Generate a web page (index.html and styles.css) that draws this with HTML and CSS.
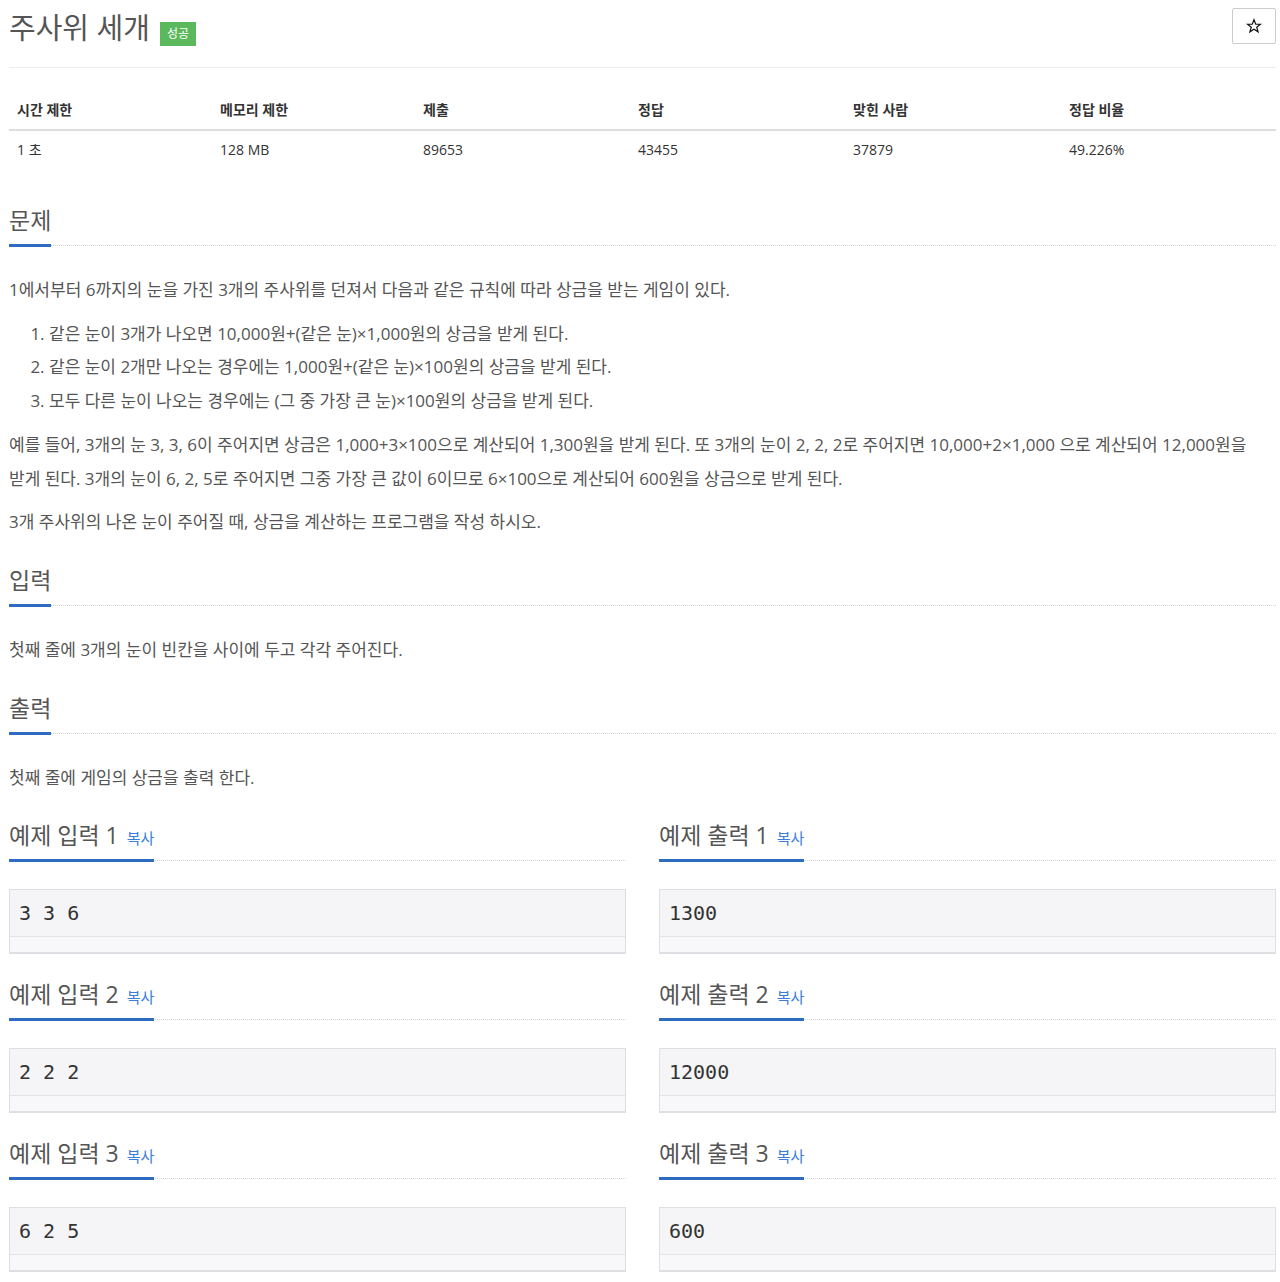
FILE: index.html
```html
<!DOCTYPE html>
<html lang="ko">
<head>
<meta charset="utf-8">
<title>주사위 세개</title>
<link rel="stylesheet" href="styles.css">
</head>
<body>
<div class="page">
  <header class="page-header">
    <div class="title-wrap">
      <h1 class="title">주사위 세개</h1>
      <span class="badge">성공</span>
    </div>
    <button class="star-btn" type="button" aria-label="즐겨찾기">
      <svg class="star-icon" viewBox="0 0 24 24" width="16" height="16" aria-hidden="true">
        <polygon points="12,2.5 14.6,9.2 21.7,9.4 16.1,13.8 18.1,20.8 12,16.7 5.9,20.8 7.9,13.8 2.3,9.4 9.4,9.2" fill="none" stroke="#111" stroke-width="1.8" stroke-linejoin="miter"/>
      </svg>
    </button>
  </header>

  <table class="info">
    <colgroup>
      <col class="c1"><col class="c2"><col class="c3"><col class="c4"><col class="c5"><col class="c6">
    </colgroup>
    <thead>
      <tr><th>시간 제한</th><th>메모리 제한</th><th>제출</th><th>정답</th><th>맞힌 사람</th><th>정답 비율</th></tr>
    </thead>
    <tbody>
      <tr><td>1 초</td><td>128 MB</td><td>89653</td><td>43455</td><td>37879</td><td>49.226%</td></tr>
    </tbody>
  </table>

  <section class="section first">
    <div class="headline"><h2><span class="hl">문제</span></h2></div>
    <div class="body">
      <p>1에서부터 6까지의 눈을 가진 3개의 주사위를 던져서 다음과 같은 규칙에 따라 상금을 받는 게임이 있다.</p>
      <ol>
        <li>같은 눈이 3개가 나오면 10,000원+(같은 눈)×1,000원의 상금을 받게 된다.</li>
        <li>같은 눈이 2개만 나오는 경우에는 1,000원+(같은 눈)×100원의 상금을 받게 된다.</li>
        <li>모두 다른 눈이 나오는 경우에는 (그 중 가장 큰 눈)×100원의 상금을 받게 된다.</li>
      </ol>
      <p>예를 들어, 3개의 눈 3, 3, 6이 주어지면 상금은 1,000+3×100으로 계산되어 1,300원을 받게 된다. 또 3개의 눈이 2, 2, 2로 주어지면 10,000+2×1,000 으로 계산되어 12,000원을 받게 된다. 3개의 눈이 6, 2, 5로 주어지면 그중 가장 큰 값이 6이므로 6×100으로 계산되어 600원을 상금으로 받게 된다.</p>
      <p class="last">3개 주사위의 나온 눈이 주어질 때, 상금을 계산하는 프로그램을 작성 하시오.</p>
    </div>
  </section>

  <section class="section">
    <div class="headline"><h2><span class="hl">입력</span></h2></div>
    <div class="body">
      <p class="last">첫째 줄에 3개의 눈이 빈칸을 사이에 두고 각각 주어진다.</p>
    </div>
  </section>

  <section class="section">
    <div class="headline"><h2><span class="hl">출력</span></h2></div>
    <div class="body">
      <p class="last">첫째 줄에 게임의 상금을 출력 한다.</p>
    </div>
  </section>

  <div class="examples">
    <div class="example">
      <div class="headline"><h2><span class="hl">예제 입력 1 <a class="copy">복사</a></span></h2></div>
      <pre class="sample">3 3 6</pre>
    </div>
    <div class="example">
      <div class="headline"><h2><span class="hl">예제 출력 1 <a class="copy">복사</a></span></h2></div>
      <pre class="sample">1300</pre>
    </div>
    <div class="example">
      <div class="headline"><h2><span class="hl">예제 입력 2 <a class="copy">복사</a></span></h2></div>
      <pre class="sample">2 2 2</pre>
    </div>
    <div class="example">
      <div class="headline"><h2><span class="hl">예제 출력 2 <a class="copy">복사</a></span></h2></div>
      <pre class="sample">12000</pre>
    </div>
    <div class="example">
      <div class="headline"><h2><span class="hl">예제 입력 3 <a class="copy">복사</a></span></h2></div>
      <pre class="sample">6 2 5</pre>
    </div>
    <div class="example">
      <div class="headline"><h2><span class="hl">예제 출력 3 <a class="copy">복사</a></span></h2></div>
      <pre class="sample">600</pre>
    </div>
  </div>
</div>
</body>
</html>
```

FILE: styles.css
```css
* { box-sizing: border-box; }

html, body {
  margin: 0;
  padding: 0;
  background: #fff;
}

body {
  font-family: "Open Sans", "Noto Sans CJK KR", sans-serif;
  color: #555;
  font-size: 14px;
}

.page {
  padding: 0 4px 0 9px;
}

/* header */
.page-header {
  display: flex;
  justify-content: space-between;
  align-items: flex-start;
  padding-top: 8px;
  padding-bottom: 19px;
  border-bottom: 1px solid #eee;
}

.title-wrap {
  display: flex;
  align-items: flex-start;
}

.title {
  margin: 0;
  font-size: 29px;
  font-weight: 400;
  line-height: 40px;
  color: #555;
}

.badge {
  margin-left: 10px;
  margin-top: 14px;
  height: 24px;
  padding: 0 7px;
  background: #5cb85c;
  color: #fff;
  font-size: 12px;
  line-height: 24px;
}

.star-btn {
  width: 44px;
  height: 36px;
  border: 1px solid #ccc;
  border-radius: 2px;
  background: #fff;
  padding: 0;
  display: flex;
  align-items: center;
  justify-content: center;
}

.star-icon {
  display: block;
}

/* info table */
.info {
  width: 100%;
  border-collapse: collapse;
  margin-top: 23px;
  color: #333;
}

.info .c1 { width: 203px; }
.info .c2 { width: 203px; }
.info .c3 { width: 215px; }
.info .c4 { width: 215px; }
.info .c5 { width: 216px; }

.info th,
.info td {
  text-align: left;
  font-size: 14px;
  line-height: 20px;
  padding: 9px 8px;
}

.info th {
  font-weight: 700;
  border-bottom: 2px solid #ddd;
}

/* sections */
.section {
  margin-top: 36px;
}

.section + .section {
  margin-top: 26px;
}

.headline {
  border-bottom: 1px dotted #d5d5d5;
  margin-bottom: 27px;
}

.headline h2 {
  margin: 0;
  font-size: 23px;
  font-weight: 400;
  line-height: 30px;
  color: #555;
}

.hl {
  display: inline-block;
  line-height: 30px;
  padding-bottom: 9px;
  border-bottom: 3px solid #2d6cc0;
  margin-bottom: -2px;
}

.copy {
  font-size: 15px;
  line-height: 1;
  color: #3b7ddd;
  margin-left: 2px;
}

.body {
  font-size: 17px;
  line-height: 33.7px;
  color: #555;
  word-break: keep-all;
}

.body p {
  margin: 0 0 10px;
}

.body p.last {
  margin-bottom: 0;
}

.body ol {
  margin: 0 0 10px;
  padding-left: 40px;
}

/* examples */
.examples {
  margin-top: 26px;
  display: grid;
  grid-template-columns: 1fr 1fr;
  column-gap: 33px;
  row-gap: 25px;
}

.example .headline {
  margin-bottom: 28px;
}

.sample {
  margin: 0;
  font-family: "DejaVu Sans Mono", monospace;
  font-size: 20px;
  line-height: 26px;
  color: #333;
  background: #f5f5f7;
  border: 1px solid #dedee3;
  border-bottom-width: 2px;
  padding: 10px 9px 11px;
  position: relative;
  height: 65px;
  white-space: pre;
}

.sample::after {
  content: "";
  position: absolute;
  left: 0;
  right: 0;
  bottom: 0;
  height: 15px;
  background: #f8f8fa;
  border-top: 1px solid #e3e3e8;
}
```
